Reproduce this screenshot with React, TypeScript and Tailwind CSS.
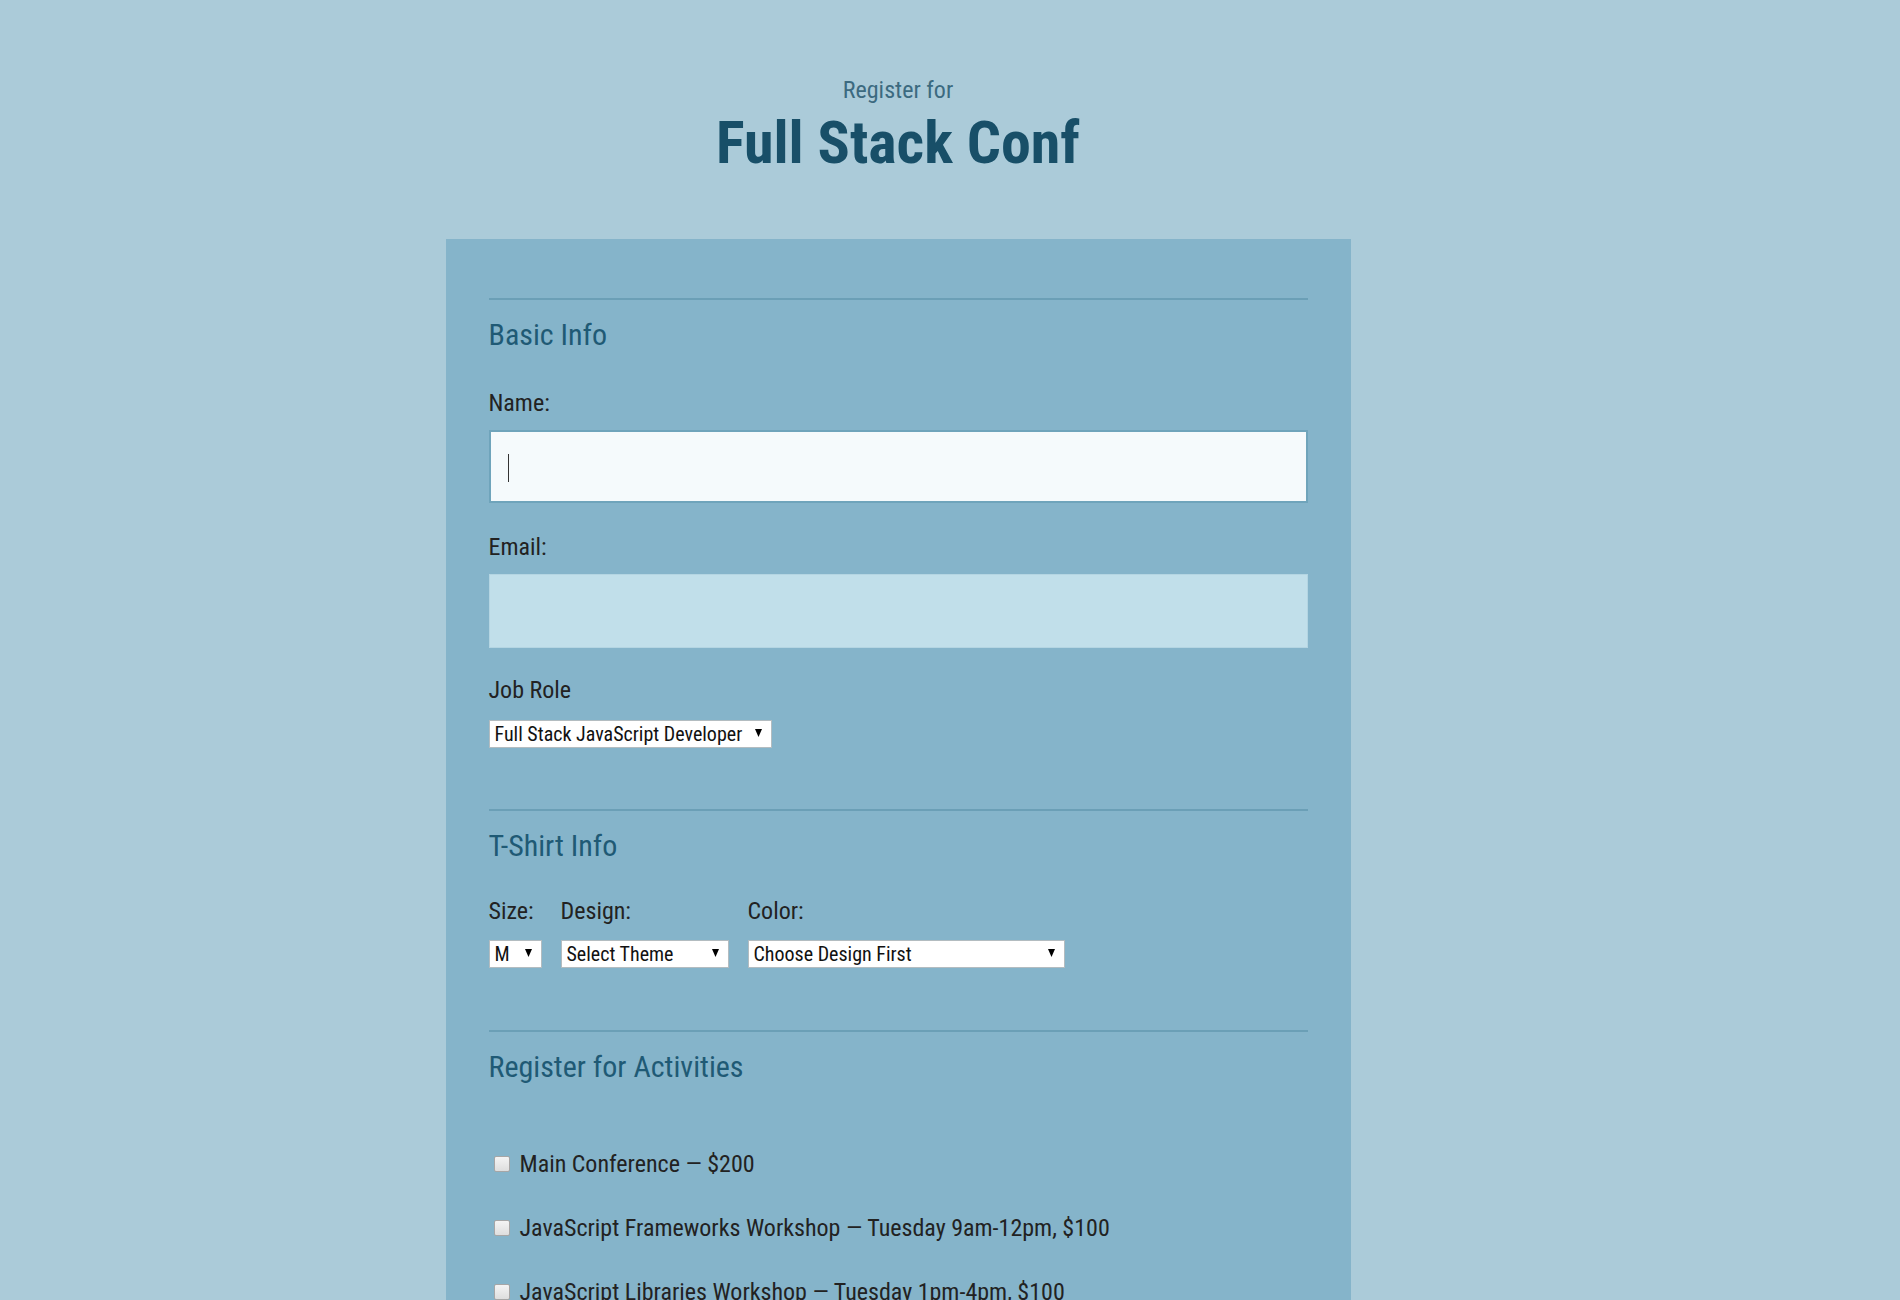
import { useState } from "react";

const activities = [
  "Main Conference — $200",
  "JavaScript Frameworks Workshop — Tuesday 9am-12pm, $100",
  "JavaScript Libraries Workshop — Tuesday 1pm-4pm, $100",
  "Express Workshop — Tuesday 9am-12pm, $100",
  "Node.js Workshop — Tuesday 1pm-4pm, $100",
  "Build tools Workshop — Wednesday 9am-12pm, $100",
  "npm Workshop — Wednesday 1pm-4pm, $100",
];

function Select({ value, options, width }: { value: string; options: string[]; width: string }) {
  return (
    <div className={`relative ${width}`}>
      <select
        defaultValue={value}
        className="w-full h-[28px] appearance-none rounded-none bg-white border border-[#b3bcc0] pl-[5px] pr-5 text-[20px] leading-[26px] text-[#111] outline-none"
      >
        {options.map((o) => (
          <option key={o}>{o}</option>
        ))}
      </select>
      <svg className="pointer-events-none absolute right-[10px] top-[9px]" width="7" height="8" viewBox="0 0 7 8">
        <polygon points="0,0 7,0 3.5,8" fill="#000" />
      </svg>
    </div>
  );
}

function SectionTitle({ children }: { children: string }) {
  return (
    <h2 className="border-t-2 border-[#6b9fb6] pt-[16px] text-[30px] leading-[37px] text-[#1f5a75]">{children}</h2>
  );
}

export default function App() {
  const [checked, setChecked] = useState<Record<string, boolean>>({});

  return (
    <div
      className="min-h-screen bg-[#abcbd9] pr-[104px] pb-20"
      style={{ fontFamily: '"Roboto Condensed", Roboto, "Liberation Sans", sans-serif' }}
    >
      <header className="pt-[75px] text-center">
        <p className="text-[24px] leading-[30px] text-[#3c6a80]">Register for</p>
        <h1 className="mt-[6px] text-[60px] leading-[64px] font-bold text-[#184f68]">Full Stack Conf</h1>
      </header>

      <form className="mx-auto mt-[64px] w-[905px] bg-[#85b4ca] px-[43px] pt-[59px] pb-16">
        {/* basic info */}
        <section>
          <SectionTitle>Basic Info</SectionTitle>
          <label className="block mt-[35px] text-[24px] leading-[30px] text-[#222]">Name:</label>
          <div className="relative mt-[12px]">
            <input
              type="text"
              className="block w-full h-[73px] bg-[#f5fafc] border-2 border-[#6fa4bb] outline-none"
            />
            <span className="pointer-events-none absolute left-[19px] top-[24px] h-[28px] w-px bg-[#333]"></span>
          </div>
          <label className="block mt-[29px] text-[24px] leading-[30px] text-[#222]">Email:</label>
          <input
            type="email"
            className="block mt-[12px] w-full h-[74px] bg-[#c1dfea] border border-[#b4d5e2] outline-none"
          />
          <label className="block mt-[27px] text-[24px] leading-[30px] text-[#222]">Job Role</label>
          <div className="mt-[15px]">
            <Select
              value="Full Stack JavaScript Developer"
              options={["Full Stack JavaScript Developer", "Front End Developer", "Back End Developer", "Designer", "Student", "Other"]}
              width="w-[283px]"
            />
          </div>
        </section>

        {/* t-shirt */}
        <section className="mt-[61px]">
          <SectionTitle>T-Shirt Info</SectionTitle>
          <div className="mt-[32px] flex gap-[19px]">
            <div>
              <label className="block text-[24px] leading-[30px] text-[#222]">Size:</label>
              <div className="mt-[14px]">
                <Select value="M" options={["S", "M", "L", "XL"]} width="w-[53px]" />
              </div>
            </div>
            <div>
              <label className="block text-[24px] leading-[30px] text-[#222]">Design:</label>
              <div className="mt-[14px]">
                <Select value="Select Theme" options={["Select Theme", "Theme - JS Puns", "Theme - I ♥ JS"]} width="w-[168px]" />
              </div>
            </div>
            <div>
              <label className="block text-[24px] leading-[30px] text-[#222]">Color:</label>
              <div className="mt-[14px]">
                <Select value="Choose Design First" options={["Choose Design First"]} width="w-[317px]" />
              </div>
            </div>
          </div>
        </section>

        {/* activities */}
        <section className="mt-[62px]">
          <SectionTitle>Register for Activities</SectionTitle>
          <div className="mt-[64px] flex flex-col gap-[34px]">
            {activities.map((a) => (
              <label key={a} className="flex items-center text-[24px] leading-[30px] text-[#222]">
                <input
                  type="checkbox"
                  checked={!!checked[a]}
                  onChange={() => setChecked({ ...checked, [a]: !checked[a] })}
                  className="appearance-none ml-[5px] mr-[10px] h-4 w-4 shrink-0 rounded-[2px] border border-[#a6a6a6] bg-gradient-to-b from-[#f4f4f4] to-[#dedede] checked:bg-[#3b7ea1]"
                />
                {a}
              </label>
            ))}
          </div>
        </section>
      </form>
    </div>
  );
}
